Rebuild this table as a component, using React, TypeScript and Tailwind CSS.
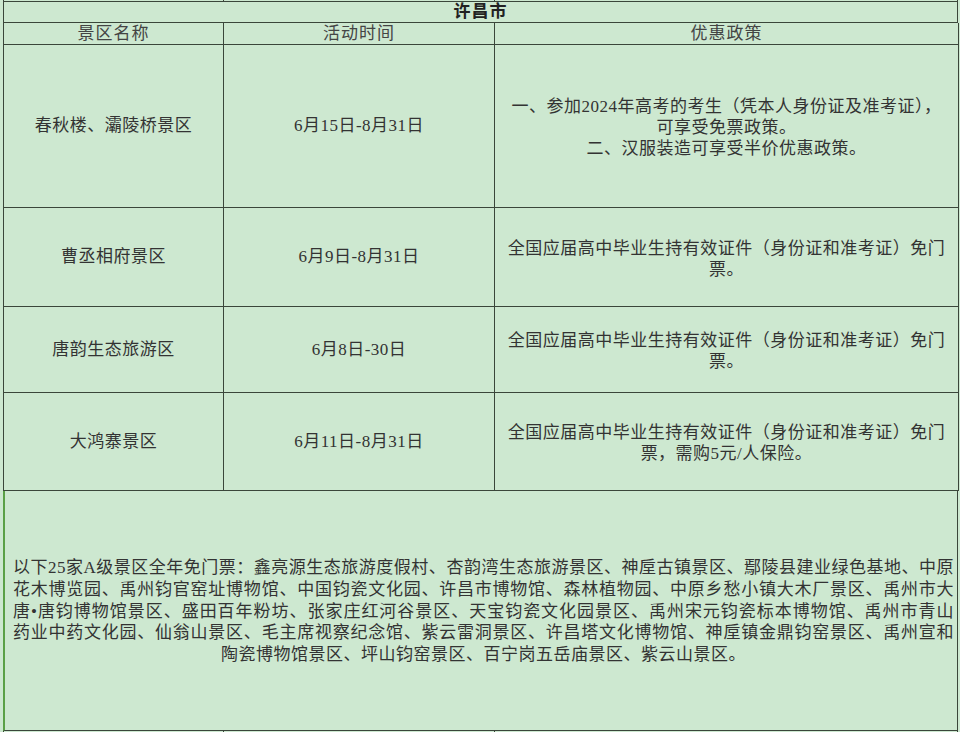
import React from "react";

const rows = [
  {
    name: "春秋楼、灞陵桥景区",
    time: "6月15日-8月31日",
    policy: [
      "一、参加2024年高考的考生（凭本人身份证及准考证），",
      "可享受免票政策。",
      "二、汉服装造可享受半价优惠政策。",
    ],
    h: "h-[163px]",
  },
  {
    name: "曹丞相府景区",
    time: "6月9日-8月31日",
    policy: ["全国应届高中毕业生持有效证件（身份证和准考证）免门", "票。"],
    h: "h-[99px]",
  },
  {
    name: "唐韵生态旅游区",
    time: "6月8日-30日",
    policy: ["全国应届高中毕业生持有效证件（身份证和准考证）免门", "票。"],
    h: "h-[86px]",
  },
  {
    name: "大鸿寨景区",
    time: "6月11日-8月31日",
    policy: ["全国应届高中毕业生持有效证件（身份证和准考证）免门", "票，需购5元/人保险。"],
    h: "h-[98px]",
  },
];

const freeLines = [
  "以下25家A级景区全年免门票：鑫亮源生态旅游度假村、杏韵湾生态旅游景区、神垕古镇景区、鄢陵县建业绿色基地、中原",
  "花木博览园、禹州钧官窑址博物馆、中国钧瓷文化园、许昌市博物馆、森林植物园、中原乡愁小镇大木厂景区、禹州市大",
  "唐•唐钧博物馆景区、盛田百年粉坊、张家庄红河谷景区、天宝钧瓷文化园景区、禹州宋元钧瓷标本博物馆、禹州市青山",
  "药业中药文化园、仙翁山景区、毛主席视察纪念馆、紫云雷洞景区、许昌塔文化博物馆、神垕镇金鼎钧窑景区、禹州宣和",
];

const App = () => {
  return (
    <div className="w-[960px] h-[732px] overflow-hidden bg-[#cde8d0] text-[#333] font-['Liberation_Serif','Noto_Sans_CJK_SC',serif] text-[17px] tracking-[0.5px]">
      {/* top edge of the row above */}
      <div className="h-[1px] ml-[3px] w-[955px] grid grid-cols-[220px_271px_464px]">
        <div className="border-l border-[#3a463a]" />
        <div className="border-l border-[#3a463a]" />
        <div className="border-x border-[#3a463a]" />
      </div>

      <div className="ml-[3px] w-[955px] border-t border-l border-[#3a463a]">
        <div className="h-[21px] border-r border-b border-[#3a463a] flex items-center justify-center font-bold text-[#222] tracking-[1px]">
          许昌市
        </div>

        <div className="grid grid-cols-[220px_271px_464px]">
          {["景区名称", "活动时间", "优惠政策"].map((t) => (
            <div
              key={t}
              className="h-[22px] border-r border-b border-[#3a463a] flex items-center justify-center text-[#444] tracking-[1px]"
            >
              {t}
            </div>
          ))}

          {rows.map((r) => (
            <React.Fragment key={r.name}>
              <div className={`${r.h} border-r border-b border-[#3a463a] flex items-center justify-center`}>
                {r.name}
              </div>
              <div className={`${r.h} border-r border-b border-[#3a463a] flex items-center justify-center`}>
                {r.time}
              </div>
              <div
                className={`${r.h} border-r border-b border-[#3a463a] flex flex-col items-center justify-center leading-[21px] pt-[3px]`}
              >
                {r.policy.map((p) => (
                  <div key={p} className="whitespace-nowrap">
                    {p}
                  </div>
                ))}
              </div>
            </React.Fragment>
          ))}
        </div>

        <div className="h-[240px] -ml-[1px] border-l-2 border-l-[#5aa046] border-r border-b border-[#3a463a] flex flex-col justify-center pl-[8px] pr-[3px] leading-[21.8px] pt-[2px]">
          {freeLines.map((l) => (
            <div key={l} className="whitespace-nowrap text-justify [text-align-last:justify]">
              {l}
            </div>
          ))}
          <div className="text-center">陶瓷博物馆景区、坪山钧窑景区、百宁岗五岳庙景区、紫云山景区。</div>
        </div>
      </div>

      <div className="h-[2px] ml-[3px] w-[955px] grid grid-cols-[220px_271px_464px]">
        <div className="border-l border-[#3a463a]" />
        <div className="border-l border-[#3a463a]" />
        <div className="border-x border-[#3a463a]" />
      </div>
    </div>
  );
};

export default App;
